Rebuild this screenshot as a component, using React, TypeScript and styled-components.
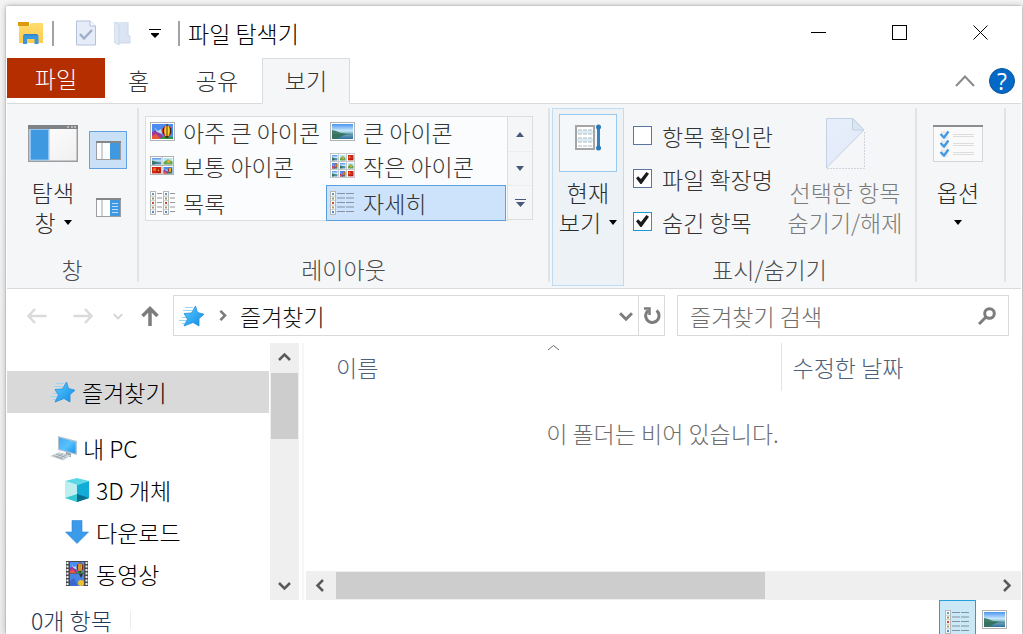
import React from "react";
import styled, { createGlobalStyle, css } from "styled-components";

const GlobalStyle = createGlobalStyle`
  *, *::before, *::after { box-sizing: border-box; }
  body { margin: 0; background: #f0f0f0; }
  body, button, input {
    font-family: "Noto Sans CJK KR", "Noto Sans", sans-serif;
    font-size: 23px;
    font-weight: 300;
    line-height: 30px;
    color: #333;
  }
  button { border: 0; padding: 0; background: none; cursor: default; }
  svg { display: block; flex: none; }
`;

/* ---------- window frame ---------- */

const Desktop = styled.div`
  display: flex;
  height: 100vh;
  min-height: 480px;
  padding: 6px 1px 0 6px;
  overflow: hidden;
  background: linear-gradient(#f4f4f4, #ececec);
`;

const Window = styled.main`
  flex: 1;
  min-width: 0;
  display: flex;
  flex-direction: column;
  padding: 0 1px;
  background: #fff;
  box-shadow: 0 0 6px rgba(0, 0, 0, 0.28), 0 0 1px rgba(0, 0, 0, 0.4);
`;

const TitleBar = styled.header`
  display: flex;
  flex: none;
  height: 52px;
`;

const QuickAccess = styled.div`
  display: flex;
  align-items: center;
  flex: 1;
  padding: 2px 0 0 11px;
`;

const QuickDivider = styled.i<{ $left: number; $right: number }>`
  width: 2px;
  height: 25px;
  margin: 0 ${(p) => p.$right}px 0 ${(p) => p.$left}px;
  background: #a3a3a3;
`;

const IconButton = styled.button<{ $w: number }>`
  display: flex;
  align-items: center;
  justify-content: center;
  width: ${(p) => p.$w}px;
  align-self: stretch;
`;

const Title = styled.h1`
  margin: 0;
  font-size: 23px;
  font-weight: 300;
  line-height: 30px;
  color: #000;
`;

/* ---------- tabs ---------- */

const TabStrip = styled.nav`
  display: flex;
  flex: none;
  height: 46px;
  border-bottom: 1px solid #d9dbdd;
`;

const Tab = styled.button<{ $w: number; $kind?: "file" | "active" }>`
  width: ${(p) => p.$w}px;
  height: 46px;
  padding-bottom: 2px;
  ${(p) =>
    p.$kind === "file" &&
    css`
      height: 40px;
      background: #b42e00;
      color: #fff;
      padding-bottom: 0;
    `}
  ${(p) =>
    p.$kind === "active" &&
    css`
      background: #f5f6f8;
      border: 1px solid #d9dbdd;
      border-bottom-color: #f5f6f8;
    `}
`;

const TabTools = styled.div`
  display: flex;
  align-items: center;
  gap: 9px;
  margin-left: auto;
  padding-right: 6px;
`;

const HelpButton = styled.button`
  width: 26px;
  height: 26px;
  border-radius: 50%;
  background: #0468c6;
  border: 1px solid #0a559d;
  color: #fff;
  font-family: "Open Sans", sans-serif;
  font-size: 23px;
  font-weight: 400;
  line-height: 24px;
`;

/* ---------- ribbon ---------- */

const Ribbon = styled.section`
  display: flex;
  flex: none;
  height: 185px;
  padding-top: 4px;
  background: #f5f6f8;
  border-bottom: 1px solid #d9dbdd;
`;

const Group = styled.div<{ $w: number }>`
  display: flex;
  flex-direction: column;
  width: ${(p) => p.$w}px;
  height: 174px;
  border-right: 2px solid #e2e3e4;
`;

const GroupBody = styled.div`
  display: flex;
  flex: 1;
`;

const GroupLabel = styled.div`
  text-align: center;
  color: #4a4a4a;
  height: 30px;
  margin-bottom: -2px;
`;

const BigButton = styled.button<{ $w: number; $dim?: boolean; $inset?: number }>`
  display: flex;
  flex-direction: column;
  align-items: center;
  width: ${(p) => p.$w}px;
  height: 132px;
  padding-left: ${(p) => p.$inset ?? 0}px;
  color: ${(p) => (p.$dim ? "#7b7b7b" : "#2b2b2b")};
`;

const BigIcon = styled.span`
  display: flex;
  align-items: center;
  justify-content: center;
  height: 69px;
  padding-top: 1px;
`;

const ButtonLine = styled.span`
  display: flex;
  align-items: center;
  gap: 8px;
  height: 30px;
  white-space: nowrap;
`;

const CurrentViewButton = styled(BigButton)`
  height: 178px;
  margin: 0 0 0 2px;
  padding-top: 5px;
  background: #edf2f6;
  border: 1px solid #c0dcf3;
`;

const CurrentViewIcon = styled.span`
  display: flex;
  align-items: center;
  justify-content: center;
  width: 58px;
  height: 58px;
  margin-bottom: 5px;
  padding-bottom: 11px;
  border: 1px solid #99c9ef;
  background: #f5f8fb;
`;

const PaneToggles = styled.div`
  display: flex;
  flex-direction: column;
  gap: 19px;
  padding-top: 23px;
`;

const PaneToggle = styled.button<{ $on?: boolean }>`
  display: flex;
  align-items: center;
  justify-content: center;
  width: 38px;
  height: 38px;
  border: 1px solid ${(p) => (p.$on ? "#62a2e4" : "transparent")};
  background: ${(p) => (p.$on ? "#c9e0f7" : "transparent")};
`;

const Gallery = styled.div`
  display: flex;
  height: 105px;
  margin: 8px 0 0 6px;
`;

const GalleryGrid = styled.div`
  display: grid;
  grid-template-columns: 180px 180px;
  grid-template-rows: 29px 39px 36px;
  width: 363px;
  border: 1px solid #dcdddf;
  background: #fbfcfe;
`;

const GalleryItem = styled.button<{ $on?: boolean }>`
  display: flex;
  align-items: center;
  gap: 8px;
  padding-left: 3px;
  white-space: nowrap;
  border: 1px solid ${(p) => (p.$on ? "#5c9fdf" : "transparent")};
  background: ${(p) => (p.$on ? "#cde2fb" : "transparent")};
`;

const GalleryScroll = styled.div`
  display: grid;
  grid-template-rows: repeat(3, 1fr);
  width: 25px;
  height: 104px;
  border: 1px solid #dcdddf;
  border-left: 0;
`;

const GalleryScrollButton = styled.button`
  display: flex;
  align-items: center;
  justify-content: center;
  & + & { border-top: 1px solid #eceef0; }
`;

const Checks = styled.div`
  display: flex;
  flex-direction: column;
  gap: 13px;
  width: 156px;
  padding: 13px 0 0 9px;
`;

const CheckLabel = styled.label`
  display: flex;
  align-items: center;
  gap: 10px;
  height: 30px;
  white-space: nowrap;
`;

const CheckBox = styled.input<{ $hot?: boolean }>`
  appearance: none;
  flex: none;
  display: grid;
  place-items: center;
  width: 19px;
  height: 19px;
  margin: 0 0 2px;
  border: 1px solid ${(p) => (p.$hot ? "#1e98d2" : "#5c74a4")};
  background: #fff;
  &:checked::before {
    content: "";
    width: 13px;
    height: 12px;
    background: #1c1c1c;
    clip-path: polygon(0 52%, 17% 36%, 38% 58%, 80% 0, 100% 14%, 43% 100%, 34% 100%);
  }
`;

/* ---------- address row ---------- */

const AddressRow = styled.div`
  display: flex;
  flex: none;
  align-items: center;
  height: 54px;
  padding: 0 12px 1px 7px;
`;

const AddressBar = styled.div`
  display: flex;
  align-items: center;
  flex: 1;
  height: 41px;
  margin: 0 12px 0 3px;
  border: 1px solid #d9d9d9;
`;

const Crumb = styled.button`
  display: flex;
  align-items: center;
  gap: 12px;
  flex: 1;
  padding-left: 5px;
  color: #111;
`;

const Refresh = styled(IconButton)`
  border-left: 1px solid #d9d9d9;
`;

const SearchBox = styled.label`
  display: flex;
  align-items: center;
  flex: 0 1 332px;
  min-width: 0;
  height: 41px;
  padding: 0 12px;
  border: 1px solid #d9d9d9;
`;

const SearchInput = styled.input`
  flex: 1;
  min-width: 0;
  padding: 0;
  border: 0;
  outline: 0;
  background: none;
  &::placeholder { color: #6d6d6d; opacity: 1; }
`;

/* ---------- content ---------- */

const Content = styled.div`
  display: flex;
  flex: 1;
  min-height: 0;
`;

const Sidebar = styled.nav`
  width: 263px;
  flex: none;
  overflow: hidden;
  padding: 28px 1px 0 0;
`;

const Tree = styled.ul`
  list-style: none;
  margin: 0 0 14px;
  padding: 0;
`;

const TreeItem = styled.a<{ $indent?: boolean; $on?: boolean }>`
  display: flex;
  align-items: center;
  gap: 6px;
  height: 42px;
  padding-left: ${(p) => (p.$indent ? 57 : 43)}px;
  color: #000;
  text-decoration: none;
  white-space: nowrap;
  background: ${(p) => (p.$on ? "#d9d9d9" : "transparent")};
`;

const ScrollTrack = styled.div<{ $horizontal?: boolean }>`
  display: flex;
  flex: none;
  flex-direction: ${(p) => (p.$horizontal ? "row" : "column")};
  ${(p) => (p.$horizontal ? "height: 29px; margin-left: 2px;" : "width: 29px;")}
  background: #efefef;
`;

const ScrollButton = styled.button`
  display: flex;
  align-items: center;
  justify-content: center;
  flex: none;
  width: 29px;
  height: 29px;
`;

const ScrollThumb = styled.div<{ $share: string }>`
  flex: 0 0 ${(p) => p.$share};
  margin: 1px;
  background: #cdcdcd;
`;

const Spacer = styled.div`
  flex: 1;
`;

const FilePane = styled.section`
  display: flex;
  flex-direction: column;
  flex: 1;
  min-width: 0;
  margin-left: 3px;
  border-left: 2px solid #f5f6f7;
`;

const FileTable = styled.table`
  width: 100%;
  table-layout: fixed;
  border-collapse: collapse;
`;

const HeadCell = styled.th<{ $w?: string }>`
  width: ${(p) => p.$w ?? "auto"};
  height: 48px;
  padding: 0;
  text-align: left;
  font-weight: 300;
  & + & { border-left: 1px solid #e3e3e3; }
`;

const HeadButton = styled.button<{ $left: number }>`
  display: flex;
  flex-direction: column;
  align-items: flex-start;
  width: 100%;
  height: 48px;
  padding: 1px 10px 0 ${(p) => p.$left}px;
  color: #4c607a;
`;

const SortMark = styled.span`
  display: flex;
  justify-content: center;
  align-self: stretch;
  height: 8px;
`;

const EmptyCell = styled.td`
  padding: 27px 0 0;
  text-align: center;
  color: #6d6d6d;
`;

const StatusBar = styled.footer`
  display: flex;
  flex: none;
  height: 34px;
  overflow: hidden;
  padding: 0 8px 0 24px;
`;

const StatusText = styled.span`
  height: 40px;
  line-height: 40px;
  color: #1e395b;
`;

const StatusDivider = styled.i`
  width: 1px;
  height: 18px;
  margin: 11px auto 0 18px;
  background: #ececec;
`;

const ViewButton = styled.button<{ $on?: boolean }>`
  display: flex;
  justify-content: center;
  width: 37px;
  height: 42px;
  padding-top: 9px;
  border: 1px solid ${(p) => (p.$on ? "#26a0da" : "transparent")};
  background: ${(p) => (p.$on ? "#cbe8f6" : "transparent")};
`;

/* ---------- icons ---------- */

const Gradients = () => (
  <svg width="0" height="0" style={{ position: "absolute" }} aria-hidden="true">
    <defs>
      <linearGradient id="sky" x1="0" y1="0" x2="0" y2="1">
        <stop offset="0" stopColor="#4a95f0" />
        <stop offset=".45" stopColor="#c9e8fb" />
        <stop offset=".62" stopColor="#7fb4c9" />
        <stop offset="1" stopColor="#2f6f9e" />
      </linearGradient>
      <linearGradient id="star" x1="0" y1="0" x2="1" y2="1">
        <stop offset="0" stopColor="#5ccbff" />
        <stop offset="1" stopColor="#0f8ae6" />
      </linearGradient>
      <linearGradient id="folder" x1="0" y1="0" x2="0" y2="1">
        <stop offset="0" stopColor="#ffdc70" />
        <stop offset="1" stopColor="#ffcb4a" />
      </linearGradient>
      <linearGradient id="screen" x1="0" y1="0" x2="1" y2="1">
        <stop offset="0" stopColor="#3fa9ee" />
        <stop offset=".5" stopColor="#58c2ff" />
        <stop offset="1" stopColor="#1a94ea" />
      </linearGradient>
      <linearGradient id="page" x1="0" y1="0" x2="1" y2="1">
        <stop offset="0" stopColor="#e8effb" />
        <stop offset="1" stopColor="#e0e8f8" />
      </linearGradient>
      <linearGradient id="pane" x1="0" y1="0" x2="1" y2="1">
        <stop offset="0" stopColor="#ffffff" />
        <stop offset="1" stopColor="#f0f0f0" />
      </linearGradient>
    </defs>
  </svg>
);

const Lake = () => (
  <g>
    <rect width="21" height="15" fill="url(#sky)" />
    <path d="M0 6 4 7 9 9 14 9.500 21 10V10.500H0z" fill="#3f7d6a" />
    <path d="M0 10H15L10 12 5 15H0z" fill="#357360" />
  </g>
);

const Balloons = () => (
  <g>
    <rect width="21" height="15" fill="#4a8cf2" />
    <path d="M0 8 4 6 8 9 12 13V15H0z" fill="#9a3a9c" />
    <path d="M0 12 4 10 9 15H0z" fill="#e8593a" />
    <path d="M2 3 6 7 9 5 10 10 5 8z" fill="#a7e4fb" />
    <path d="M8 15 12 12 21 13V15z" fill="#2a9a47" />
    <ellipse cx="15" cy="7" rx="5" ry="5.500" fill="#d62718" />
    <path d="M13.500 2C11.500 5 12 9 13.500 12H16.500C18 9 18.500 5 16.500 2" fill="#ffd32d" />
    <path d="M15 0V12M11.500 4V10M18.500 4V10" stroke="#2b2820" strokeWidth=".9" />
    <rect x="13.500" y="12" width="3" height="2" fill="#463215" />
  </g>
);

const Flowers = () => (
  <g>
    <rect width="21" height="15" fill="#cc2413" />
    <circle cx="6" cy="6" r="4" fill="#f26b28" />
    <circle cx="15" cy="9" r="5" fill="#a90f12" />
    <circle cx="15" cy="8" r="2" fill="#ffb030" />
  </g>
);

const Meadow = () => (
  <g>
    <rect width="21" height="15" fill="#b8e4f4" />
    <path d="M0 10 10 3 21 8V15H0z" fill="#63a84b" />
    <circle cx="12" cy="8" r="4" fill="#e8a837" />
  </g>
);

const Framed = ({ children }: { children: React.ReactNode }) => (
  <svg width="25" height="19" viewBox="0 0 25 19">
    <rect x=".5" y=".5" width="24" height="18" fill="#fff" stroke="#b0b2b4" />
    <g transform="translate(2 2)">{children}</g>
  </svg>
);

const MediumIcons = () => (
  <svg width="25" height="19" viewBox="0 0 25 19">
    <rect x=".5" y=".5" width="23" height="18" fill="#fff" stroke="#b0b2b4" />
    <path d="M12 0V19M0 9.500H24" stroke="#b0b2b4" />
    <g transform="translate(2 2) scale(.43)"><Lake /></g>
    <g transform="translate(13.500 2) scale(.43)"><Meadow /></g>
    <g transform="translate(2 11) scale(.43)"><Flowers /></g>
    <g transform="translate(13.500 11) scale(.43)"><Balloons /></g>
  </svg>
);

const SmallIcons = () => {
  const art = [Lake, Meadow, Flowers, Balloons, Lake, Meadow, Lake, Balloons, Flowers];
  return (
    <svg width="25" height="25" viewBox="0 0 25 25">
      <rect x=".5" y=".5" width="24" height="24" fill="#fff" stroke="#c6c8ca" />
      <path d="M8.500 0V25M16.500 0V25M0 8.500H25M0 16.500H25" stroke="#c6c8ca" />
      {art.map((Art, i) => (
        <g key={i} transform={`translate(${2 + (i % 3) * 8} ${2 + Math.floor(i / 3) * 8}) scale(.26 .36)`}>
          <Art />
        </g>
      ))}
    </svg>
  );
};

const dots = ["#56a0b8", "#8c9a55", "#d2452f", "#9aa25f", "#4a8fd0"];

const Filmlet = ({ x }: { x: number }) => (
  <g>
    <rect x={x + 0.5} y=".5" width="5" height="23" fill="#fff" stroke="#b5b7b9" />
    {dots.map((c, i) => (
      <g key={i}>
        <rect x={x + 2} y={2 + i * 4.5} width="2" height="2" fill={c} />
        <path d={`M${x} ${5.2 + i * 4.5}h6`} stroke="#b9bbbd" strokeWidth=".8" />
      </g>
    ))}
  </g>
);

const lineRows = [2.5, 7, 11.5, 16, 20.5];

const ListIcon = () => (
  <svg width="25" height="24" viewBox="0 0 25 24">
    <Filmlet x={0} />
    <Filmlet x={13} />
    {lineRows.map((y) => (
      <path key={y} d={`M7 ${y}h5M20 ${y}h5`} stroke="#96989a" />
    ))}
  </svg>
);

const DetailsIcon = () => (
  <svg width="25" height="24" viewBox="0 0 25 24">
    <Filmlet x={0} />
    {lineRows.map((y) => (
      <path key={y} d={`M7 ${y}h8M16 ${y}h8`} stroke="#8492a2" />
    ))}
  </svg>
);

const ExplorerIcon = () => (
  <svg width="26" height="22" viewBox="0 0 26 22">
    <path d="M0 0H11V4H0z" fill="#dd9a0c" />
    <path d="M1 4H11L13 1H25V21H1z" fill="url(#folder)" />
    <path d="M5 22V14Q5 12 7 12H18Q20.500 12 20.500 14V22H16.500V17H9V22z" fill="#3b97dd" />
    <path d="M7 12H18L20 13.500H5.500z" fill="#2f86cd" />
  </svg>
);

const PropertiesIcon = () => (
  <svg width="20" height="26" viewBox="0 0 20 26">
    <path d="M.5 1H14L19.500 6V25H.5z" fill="#e6edf9" stroke="#b3c1d9" />
    <path d="M14 1V6H19.500" fill="#f8faff" stroke="#b3c1d9" />
    <path d="M4 14 8 18.500 16 10" fill="none" stroke="#a0b0cb" strokeWidth="2.500" />
  </svg>
);

const NewFolderIcon = () => (
  <svg width="17" height="24" viewBox="0 0 17 24">
    <path d="M0 1H14V14L16 15V22H0z" fill="#dae4f2" />
    <path d="M0 1 5 4V24L0 21z" fill="#dfe9f6" stroke="#c6d3e7" strokeWidth=".8" />
    <path d="M14 1V14L16 15V22H5" fill="none" stroke="#ccd8ea" />
  </svg>
);

const QuickMenuIcon = () => (
  <svg width="12" height="9" viewBox="0 0 12 9">
    <path d="M0 .5H12" stroke="#000" />
    <path d="M2 4H10V5L6 9 2 5z" fill="#000" />
  </svg>
);

const Caret = ({ color = "#000", up = false }: { color?: string; up?: boolean }) => (
  <svg width="8" height="5" viewBox="0 0 8 5">
    <path d={up ? "M0 5H8L4 0z" : "M0 0H8L4 5z"} fill={color} />
  </svg>
);

const GalleryMore = () => (
  <svg width="11" height="8" viewBox="0 0 11 8">
    <path d="M0 .5H11" stroke="#46597a" />
    <path d="M1 3H10L5.500 8z" fill="#46597a" />
  </svg>
);

const Minimize = () => (
  <svg width="15" height="15" viewBox="0 0 15 15"><path d="M0 7.500H15" stroke="#000" /></svg>
);
const Maximize = () => (
  <svg width="15" height="15" viewBox="0 0 15 15"><rect x=".5" y=".5" width="14" height="14" fill="none" stroke="#000" /></svg>
);
const Close = () => (
  <svg width="15" height="15" viewBox="0 0 15 15"><path d="M.5 .5 14.500 14.500M14.500 .5 .5 14.500" stroke="#000" /></svg>
);

const NavPaneIcon = () => (
  <svg width="50" height="37" viewBox="0 0 50 37">
    <rect x=".75" y=".75" width="48.500" height="35.500" fill="url(#pane)" stroke="#9b9da0" strokeWidth="1.500" />
    <rect width="50" height="4" fill="#808386" />
    <path d="M39 2H41M43 2H45M46 2H48" stroke="#b8b8b8" strokeWidth="2" />
    <rect x="1.500" y="4" width="20" height="31.500" fill="#8ec5f2" />
    <rect x="3" y="5" width="17" height="29.500" fill="#3f99e0" />
  </svg>
);

const SmallPaneIcon = ({ lines = false }: { lines?: boolean }) => (
  <svg width="25" height="19" viewBox="0 0 25 19">
    <rect x=".5" y=".5" width="24" height="18" fill="#fdfdfd" stroke="#9b9da0" />
    <rect width="25" height="2" fill="#85888b" />
    <path d="M6 2V18" stroke="#a3a5a8" />
    <rect x="14" y="2" width="10" height="16" fill="#3f99e0" />
    {lines && <path d="M16 5.500H22M16 8.500H22M16 11.500H22M16 14.500H22" stroke="#b9dcf8" />}
  </svg>
);

const CurrentViewArt = () => (
  <svg width="26" height="27" viewBox="0 0 26 27">
    <rect x="1" y="2" width="18" height="23" fill="#fff" stroke="#a5a5a5" strokeWidth="2" />
    <path d="M2 8H18M2 16H18" stroke="#d9ebf4" strokeWidth="3" />
    {[6, 10, 14, 18, 22].map((y) => (
      <path key={y} d={`M3 ${y}h4M8 ${y}h4M13 ${y}h4`} stroke="#a9b9c4" strokeWidth="1.200" />
    ))}
    <path d="M23.500 2V25" stroke="#3484c4" strokeWidth="3" />
    <circle cx="23.500" cy="3" r="2.500" fill="#2b78b8" />
    <circle cx="23.500" cy="24" r="2.500" fill="#2b78b8" />
  </svg>
);

const HideItemsIcon = () => (
  <svg width="39" height="51" viewBox="0 0 39 51">
    <path d="M1 50.500H38.500V13" fill="none" stroke="#cfd3dc" strokeDasharray="2 1" />
    <path d="M.5 .5H27L38 12 .5 50z" fill="url(#page)" stroke="#c6d0e4" />
    <path d="M26.500 .5V12H38z" fill="#dbe6f2" stroke="#c0cfe0" />
  </svg>
);

const OptionsIcon = () => (
  <svg width="50" height="37" viewBox="0 0 50 37">
    <rect x=".5" y=".5" width="49" height="36" fill="#fafafa" stroke="#d4d5d6" />
    <rect width="50" height="2" fill="#8b8d8f" />
    {[10, 19, 28].map((y) => (
      <g key={y}>
        <rect x="8" y={y - 4} width="7" height="8" fill="#e9ebed" />
        <path d={`M7.500 ${y - 1}l3.500 3.500 4.500-6`} fill="none" stroke="#3c98e4" strokeWidth="2.200" />
        <path d={`M20 ${y - 0.5}h21M20 ${y + 1.5}h21`} stroke="#dcdddd" />
      </g>
    ))}
  </svg>
);

const Arrow = ({ dir }: { dir: "left" | "right" }) => (
  <svg width="20" height="16" viewBox="0 0 20 16">
    <path
      d="M8 1 1.500 8 8 15M1.500 8H19.500"
      fill="none"
      stroke="#dadada"
      strokeWidth="2.500"
      transform={dir === "right" ? "matrix(-1 0 0 1 20 0)" : undefined}
    />
  </svg>
);

const UpArrow = () => (
  <svg width="18" height="20" viewBox="0 0 18 20">
    <path d="M1.500 10 9 2.500 16.500 10M9 2V20" fill="none" stroke="#7c7c7c" strokeWidth="3.500" />
  </svg>
);

const Chevron = ({ dir, size = 13, color = "#5a5a5a", weight = 2.5 }: { dir: "up" | "down" | "left" | "right"; size?: number; color?: string; weight?: number }) => {
  const turn = { down: 0, left: 90, up: 180, right: 270 }[dir];
  return (
    <svg width={size} height={size} viewBox="0 0 13 13">
      <path d="M1 4 6.500 9.500 12 4" fill="none" stroke={color} strokeWidth={weight} transform={`rotate(${turn} 6.500 6.500)`} />
    </svg>
  );
};

const ThinCaret = ({ w, h, color, weight }: { w: number; h: number; color: string; weight: number }) => (
  <svg width={w} height={h} viewBox={`0 0 ${w} ${h}`}>
    <path d={`M1 ${h - 1}L${w / 2} 1.500 ${w - 1} ${h - 1}`} fill="none" stroke={color} strokeWidth={weight} />
  </svg>
);

const RefreshIcon = () => (
  <svg width="18" height="18" viewBox="0 0 18 18">
    <path d="M13.500 3.500A6.700 6.700 0 1 1 3.500 5.500L5 3.500" fill="none" stroke="#7c7c7c" strokeWidth="3" />
    <path d="M1 1.500H6.500V8" fill="none" stroke="#7c7c7c" strokeWidth="2.500" />
  </svg>
);

const SearchIcon = () => (
  <svg width="18" height="18" viewBox="0 0 18 18">
    <circle cx="11.500" cy="6.500" r="4.800" fill="none" stroke="#7c7c7c" strokeWidth="3" />
    <path d="M8 10 1 17" stroke="#7c7c7c" strokeWidth="3" />
  </svg>
);

const StarIcon = () => (
  <svg width="26" height="22" viewBox="0 0 26 22">
    <path d="M6 2.500H14M4 5.500H13M3 12.500H8M0 15.500H7M3 18.500H6" stroke="#9ad6f7" strokeWidth="1.200" />
    <path d="M16.500 1 18.500 7.500 25 9.200 20 13.500 20 21 14 17.500 5 21 8.500 14 5 8.500 12.500 8z" fill="url(#star)" stroke="#1f8fdc" strokeWidth=".8" />
  </svg>
);

const PcIcon = () => (
  <svg width="27" height="25" viewBox="0 0 27 25">
    <path d="M8 0 27 5V19L8 14z" fill="#b3c4d0" />
    <path d="M9 1.500 25.500 6V17.500L9 13z" fill="url(#screen)" />
    <path d="M16 16 21 17.500V21L15 20z" fill="#9aa3aa" />
    <path d="M0 20 9 16 21 19.500 13 24.500z" fill="#cfd6dc" />
    <path d="M3 19.500 13 23M6 18 16 21.500M6 21.500 13 17.500M9 22.500 17 18.500" stroke="#98a3ac" strokeWidth=".8" />
  </svg>
);

const CubeIcon = () => (
  <svg width="26" height="26" viewBox="0 0 26 26">
    <path d="M1 4 13 1 25 4 13 8z" fill="#5bd8e6" />
    <path d="M1 4 13 8V25L1 21z" fill="#bdeef0" />
    <path d="M25 4 13 8V25L25 21z" fill="#11acd8" />
    <path d="M1 21 13 17V25z" fill="#37c8d3" />
    <path d="M25 21 13 17V25z" fill="#076f8c" />
  </svg>
);

const DownloadIcon = () => (
  <svg width="26" height="24" viewBox="0 0 26 24">
    <path d="M8 .5H18V12H24.500L13 23.500 1.500 12H8z" fill="#3b9bea" stroke="#2f86d6" strokeWidth=".6" />
  </svg>
);

const VideoIcon = () => (
  <svg width="26" height="26" viewBox="0 0 26 26">
    <rect x="2" width="22" height="25" fill="#4a4a4e" />
    <path d="M3.500 1V25M22.500 1V25" stroke="#f0f0f0" strokeWidth="2" strokeDasharray="2 1.500" />
    <rect x="6" y="1" width="14" height="11" fill="#4780e6" />
    <g transform="translate(6 1) scale(.67 .75)"><Balloons /></g>
    <rect x="6" y="13" width="14" height="12" fill="#4b85e4" />
    <path d="M15 13H19L17 17z" fill="#33332c" />
    <circle cx="17" cy="22" r="3" fill="#efc02c" />
    <path d="M6 20 10 17 14 25H6z" fill="#3a68cb" />
  </svg>
);

/* ---------- page ---------- */

const layouts = [
  { label: "아주 큰 아이콘", icon: <Framed><Balloons /></Framed> },
  { label: "큰 아이콘", icon: <Framed><Lake /></Framed> },
  { label: "보통 아이콘", icon: <MediumIcons /> },
  { label: "작은 아이콘", icon: <SmallIcons /> },
  { label: "목록", icon: <ListIcon /> },
  { label: "자세히", icon: <DetailsIcon />, on: true },
];

const options = [
  { label: "항목 확인란", checked: false },
  { label: "파일 확장명", checked: true },
  { label: "숨긴 항목", checked: true, hot: true },
];

const places = [
  { label: "3D 개체", icon: <CubeIcon /> },
  { label: "다운로드", icon: <DownloadIcon /> },
  { label: "동영상", icon: <VideoIcon /> },
];

export default function App() {
  return (
    <Desktop>
      <GlobalStyle />
      <Gradients />
      <Window>
        <TitleBar>
          <QuickAccess>
            <ExplorerIcon />
            <QuickDivider $left={8} $right={14} />
            <IconButton $w={36} aria-label="속성"><PropertiesIcon /></IconButton>
            <IconButton $w={36} aria-label="새 폴더"><NewFolderIcon /></IconButton>
            <IconButton $w={30} aria-label="빠른 실행 도구 모음 사용자 지정"><QuickMenuIcon /></IconButton>
            <QuickDivider $left={8} $right={8} />
            <Title>파일 탐색기</Title>
          </QuickAccess>
          <IconButton $w={81} aria-label="최소화"><Minimize /></IconButton>
          <IconButton $w={81} aria-label="최대화"><Maximize /></IconButton>
          <IconButton $w={81} aria-label="닫기"><Close /></IconButton>
        </TitleBar>

        <TabStrip>
          <Tab $w={98} $kind="file">파일</Tab>
          <Tab $w={67}>홈</Tab>
          <Tab $w={90}>공유</Tab>
          <Tab $w={88} $kind="active">보기</Tab>
          <TabTools>
            <IconButton $w={30} aria-label="리본 최소화"><ThinCaret w={20} h={12} color="#8a8a8a" weight={2} /></IconButton>
            <HelpButton aria-label="도움말">?</HelpButton>
          </TabTools>
        </TabStrip>

        <Ribbon>
          <Group $w={132}>
            <GroupBody>
              <BigButton $w={82} $inset={10}>
                <BigIcon><NavPaneIcon /></BigIcon>
                <ButtonLine>탐색</ButtonLine>
                <ButtonLine>창<Caret /></ButtonLine>
              </BigButton>
              <PaneToggles>
                <PaneToggle $on aria-label="미리 보기 창"><SmallPaneIcon /></PaneToggle>
                <PaneToggle aria-label="세부 정보 창"><SmallPaneIcon lines /></PaneToggle>
              </PaneToggles>
            </GroupBody>
            <GroupLabel>창</GroupLabel>
          </Group>

          <Group $w={411}>
            <GroupBody>
              <Gallery>
                <GalleryGrid>
                  {layouts.map((l) => (
                    <GalleryItem key={l.label} $on={l.on}>{l.icon}{l.label}</GalleryItem>
                  ))}
                </GalleryGrid>
                <GalleryScroll>
                  <GalleryScrollButton aria-label="위로"><Caret up color="#46597a" /></GalleryScrollButton>
                  <GalleryScrollButton aria-label="아래로"><Caret color="#46597a" /></GalleryScrollButton>
                  <GalleryScrollButton aria-label="자세히"><GalleryMore /></GalleryScrollButton>
                </GalleryScroll>
              </Gallery>
            </GroupBody>
            <GroupLabel>레이아웃</GroupLabel>
          </Group>

          <CurrentViewButton $w={72}>
            <CurrentViewIcon><CurrentViewArt /></CurrentViewIcon>
            <ButtonLine>현재</ButtonLine>
            <ButtonLine>보기<Caret /></ButtonLine>
          </CurrentViewButton>

          <Group $w={293}>
            <GroupBody>
              <Checks>
                {options.map((o) => (
                  <CheckLabel key={o.label}>
                    <CheckBox type="checkbox" defaultChecked={o.checked} $hot={o.hot} />
                    {o.label}
                  </CheckLabel>
                ))}
              </Checks>
              <BigButton $w={130} $dim disabled>
                <BigIcon><HideItemsIcon /></BigIcon>
                <ButtonLine>선택한 항목</ButtonLine>
                <ButtonLine>숨기기/해제</ButtonLine>
              </BigButton>
            </GroupBody>
            <GroupLabel>표시/숨기기</GroupLabel>
          </Group>

          <Group $w={89}>
            <BigButton $w={82}>
              <BigIcon><OptionsIcon /></BigIcon>
              <ButtonLine>옵션</ButtonLine>
              <ButtonLine><Caret /></ButtonLine>
            </BigButton>
          </Group>
        </Ribbon>

        <AddressRow>
          <IconButton $w={46} aria-label="뒤로" disabled><Arrow dir="left" /></IconButton>
          <IconButton $w={46} aria-label="앞으로" disabled><Arrow dir="right" /></IconButton>
          <IconButton $w={23} aria-label="최근 위치"><Chevron dir="down" size={10} color="#d4d4d4" /></IconButton>
          <IconButton $w={41} aria-label="위로"><UpArrow /></IconButton>
          <AddressBar>
            <Crumb>
              <StarIcon />
              <Chevron dir="right" size={11} color="#7c7c7c" weight={3} />
              즐겨찾기
            </Crumb>
            <IconButton $w={24} aria-label="이전 위치"><Chevron dir="down" size={14} color="#7c7c7c" weight={2.8} /></IconButton>
            <Refresh $w={26} aria-label="새로 고침"><RefreshIcon /></Refresh>
          </AddressBar>
          <SearchBox>
            <SearchInput type="search" placeholder="즐겨찾기 검색" aria-label="즐겨찾기 검색" />
            <SearchIcon />
          </SearchBox>
        </AddressRow>

        <Content>
          <Sidebar>
            <Tree>
              <li><TreeItem href="#favorites" $on><StarIcon />즐겨찾기</TreeItem></li>
            </Tree>
            <Tree>
              <li><TreeItem href="#pc"><PcIcon />내 PC</TreeItem></li>
              {places.map((p) => (
                <li key={p.label}><TreeItem href="#place" $indent>{p.icon}{p.label}</TreeItem></li>
              ))}
            </Tree>
          </Sidebar>
          <ScrollTrack>
            <ScrollButton aria-label="위로 스크롤"><Chevron dir="up" /></ScrollButton>
            <ScrollThumb $share="66px" />
            <Spacer />
            <ScrollButton aria-label="아래로 스크롤"><Chevron dir="down" /></ScrollButton>
          </ScrollTrack>

          <FilePane>
            <FileTable>
              <thead>
                <tr>
                  <HeadCell $w="477px">
                    <HeadButton $left={32}>
                      <SortMark><ThinCaret w={13} h={7} color="#6d6d6d" weight={1} /></SortMark>
                      이름
                    </HeadButton>
                  </HeadCell>
                  <HeadCell>
                    <HeadButton $left={11}><SortMark />수정한 날짜</HeadButton>
                  </HeadCell>
                </tr>
              </thead>
              <tbody>
                <tr><EmptyCell colSpan={2}>이 폴더는 비어 있습니다.</EmptyCell></tr>
              </tbody>
            </FileTable>
            <Spacer />
            <ScrollTrack $horizontal>
              <ScrollButton aria-label="왼쪽으로 스크롤"><Chevron dir="left" /></ScrollButton>
              <ScrollThumb $share="60%" />
              <Spacer />
              <ScrollButton aria-label="오른쪽으로 스크롤"><Chevron dir="right" /></ScrollButton>
            </ScrollTrack>
          </FilePane>
        </Content>

        <StatusBar>
          <StatusText>0개 항목</StatusText>
          <StatusDivider />
          <ViewButton $on aria-label="자세히 보기"><DetailsIcon /></ViewButton>
          <ViewButton aria-label="큰 아이콘 보기"><Framed><Lake /></Framed></ViewButton>
        </StatusBar>
      </Window>
    </Desktop>
  );
}
